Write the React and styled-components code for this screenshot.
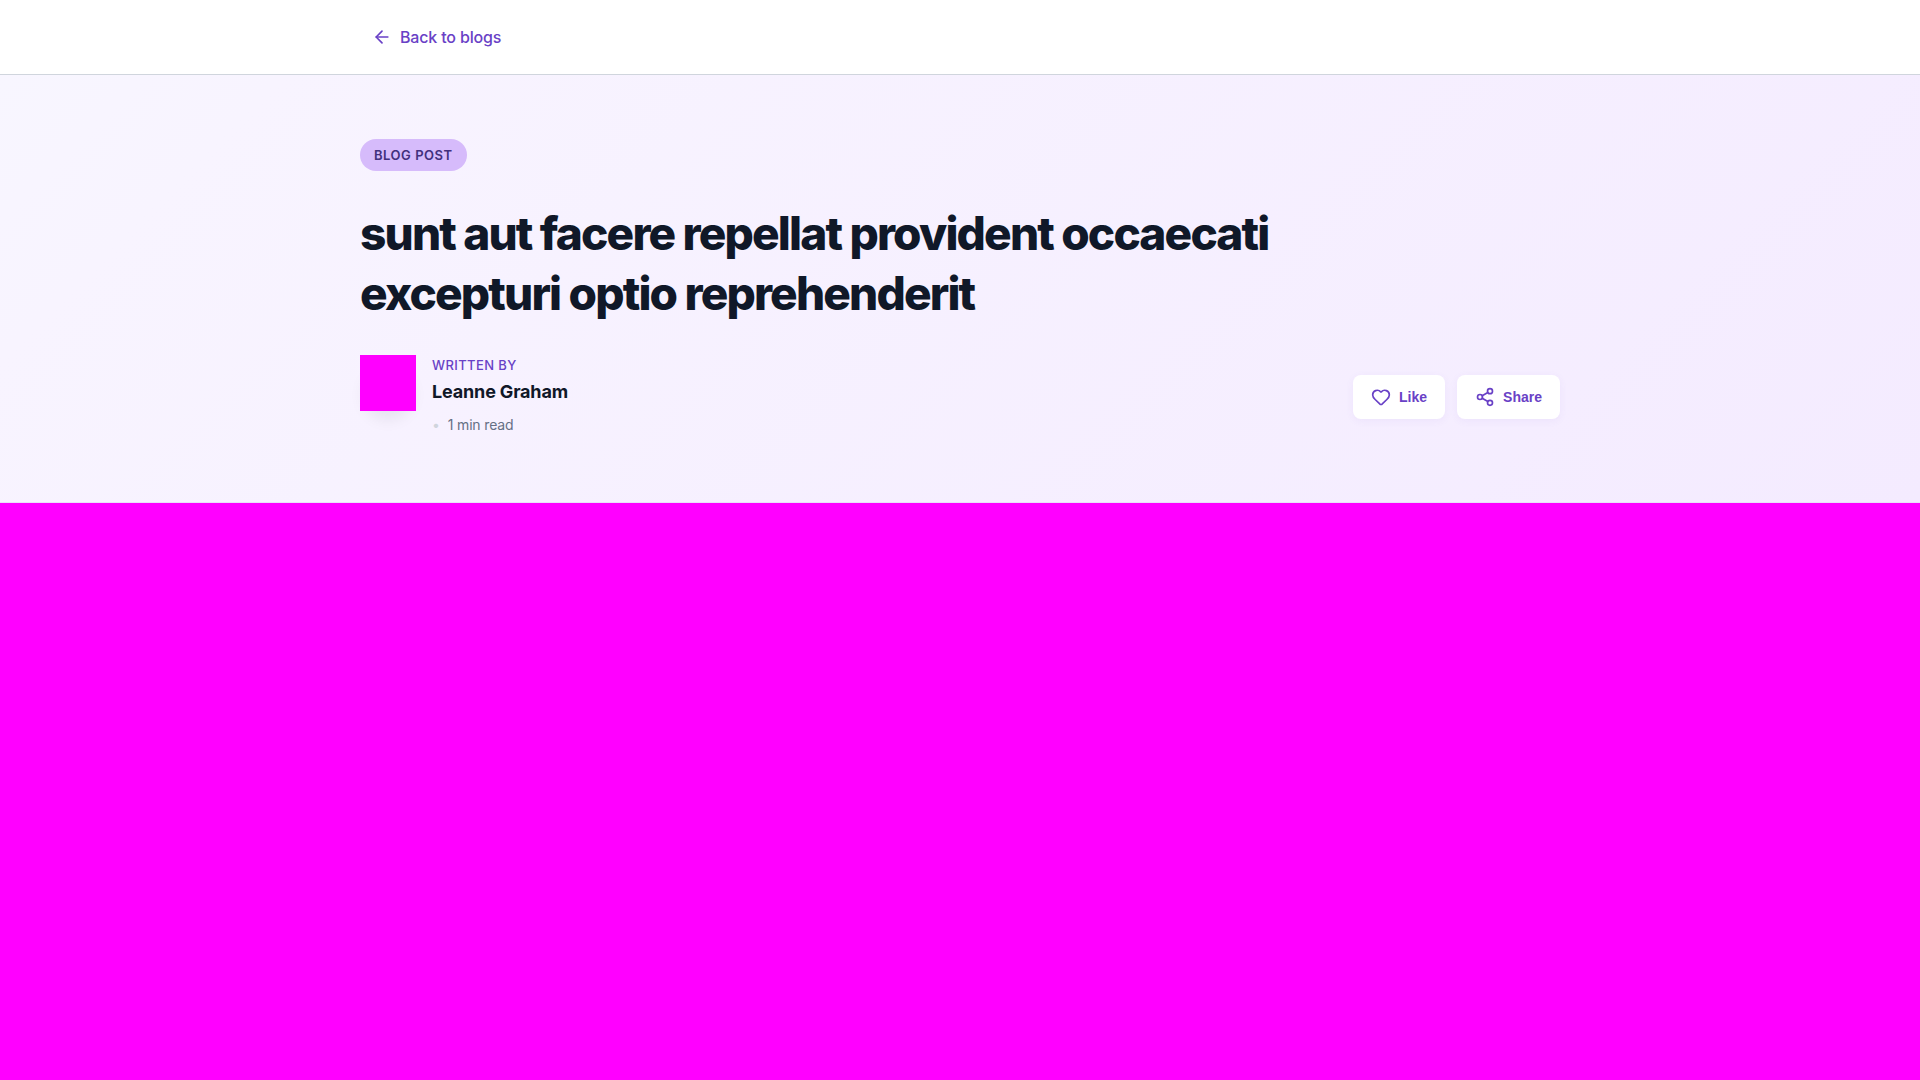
import React from "react";
import styled, { createGlobalStyle } from "styled-components";
import { ArrowLeft, Heart, Share2 } from "lucide-react";

const GlobalStyle = createGlobalStyle`
  *, *::before, *::after { box-sizing: border-box; }
  body {
    margin: 0;
    background: #ffffff;
    color: #101828;
    font-family: Inter, "Liberation Sans", sans-serif;
    font-size: 16px;
    line-height: 26px;
    letter-spacing: -0.01em;
    -webkit-font-smoothing: antialiased;
  }
`;

const Page = styled.div`
  display: flex;
  flex-direction: column;
  min-height: 100vh;
`;

const Container = styled.div`
  width: 100%;
  max-width: 1200px;
  margin: 0 auto;
`;

const TopBar = styled.header`
  padding: 16px 24px;
  background: #ffffff;
  border-bottom: 1px solid #d0d5dd;
`;

const BackLink = styled.a`
  display: inline-flex;
  align-items: center;
  gap: 8px;
  padding: 8px 12px;
  color: #6941c6;
  font-weight: 500;
  text-decoration: none;
  vertical-align: top;
`;

const Hero = styled.section`
  padding: 64px 24px 63px;
  background: linear-gradient(135deg, #f8f6ff 0%, #f8f4ff 12%, #f4ebff 100%);
  border-bottom: 1px solid #e9e0fa;
`;

const Badge = styled.span`
  display: block;
  width: fit-content;
  margin-bottom: 32px;
  padding: 6px 14px;
  border-radius: 16px;
  background: #d6bbfb;
  color: #42307d;
  font-size: 13px;
  line-height: 20px;
  font-weight: 600;
  letter-spacing: 0.04em;
  text-transform: uppercase;
`;

const Title = styled.h1`
  max-width: 960px;
  margin: 0 0 32px;
  font-size: 46px;
  line-height: 60px;
  font-weight: 800;
  letter-spacing: -0.04em;
`;

const MetaRow = styled.div`
  display: flex;
  align-items: center;
  justify-content: space-between;
  gap: 24px;
`;

const Author = styled.div`
  display: flex;
  align-items: flex-start;
  gap: 16px;
`;

const Avatar = styled.div`
  width: 56px;
  height: 56px;
  border-radius: 50%;
  box-shadow: 0 12px 16px -4px rgba(16, 24, 40, 0.08);
`;

const AvatarImage = styled.div`
  width: 100%;
  height: 100%;
  background: #ff00ff;
`;

const AuthorText = styled.div`
  display: flex;
  flex-direction: column;
`;

const Label = styled.span`
  color: #6941c6;
  font-size: 13px;
  line-height: 20px;
  font-weight: 500;
  letter-spacing: 0.03em;
  text-transform: uppercase;
`;

const Name = styled.span`
  margin-bottom: 2px;
  font-size: 18px;
  line-height: 34px;
  font-weight: 700;
`;

const ReadTime = styled.span`
  display: flex;
  align-items: center;
  gap: 8px;
  color: #667085;
  font-size: 14px;
  line-height: 28px;

  &::before {
    content: "•";
    color: #d0d5dd;
  }
`;

const Actions = styled.div`
  display: flex;
  gap: 12px;
`;

const ActionButton = styled.button`
  display: inline-flex;
  align-items: center;
  gap: 8px;
  padding: 12px 18px;
  border: 0;
  border-radius: 8px;
  background: #ffffff;
  color: #6941c6;
  box-shadow: 0 2px 8px rgba(105, 65, 198, 0.06);
  font-family: "Liberation Sans", Arial, sans-serif;
  font-size: 14px;
  line-height: 20px;
  font-weight: 600;
  cursor: pointer;
`;

const Cover = styled.main`
  flex: 1;
  background: #ff00ff;
`;

export default function App() {
  return (
    <Page>
      <GlobalStyle />
      <TopBar>
        <Container>
          <BackLink href="#blogs">
            <ArrowLeft size={20} aria-hidden="true" />
            Back to blogs
          </BackLink>
        </Container>
      </TopBar>
      <Hero>
        <Container>
          <Badge>Blog post</Badge>
          <Title>sunt aut facere repellat provident occaecati excepturi optio reprehenderit</Title>
          <MetaRow>
            <Author>
              <Avatar>
                <AvatarImage />
              </Avatar>
              <AuthorText>
                <Label>Written by</Label>
                <Name>Leanne Graham</Name>
                <ReadTime>1 min read</ReadTime>
              </AuthorText>
            </Author>
            <Actions>
              <ActionButton type="button">
                <Heart size={20} aria-hidden="true" />
                Like
              </ActionButton>
              <ActionButton type="button">
                <Share2 size={20} aria-hidden="true" />
                Share
              </ActionButton>
            </Actions>
          </MetaRow>
        </Container>
      </Hero>
      <Cover />
    </Page>
  );
}
